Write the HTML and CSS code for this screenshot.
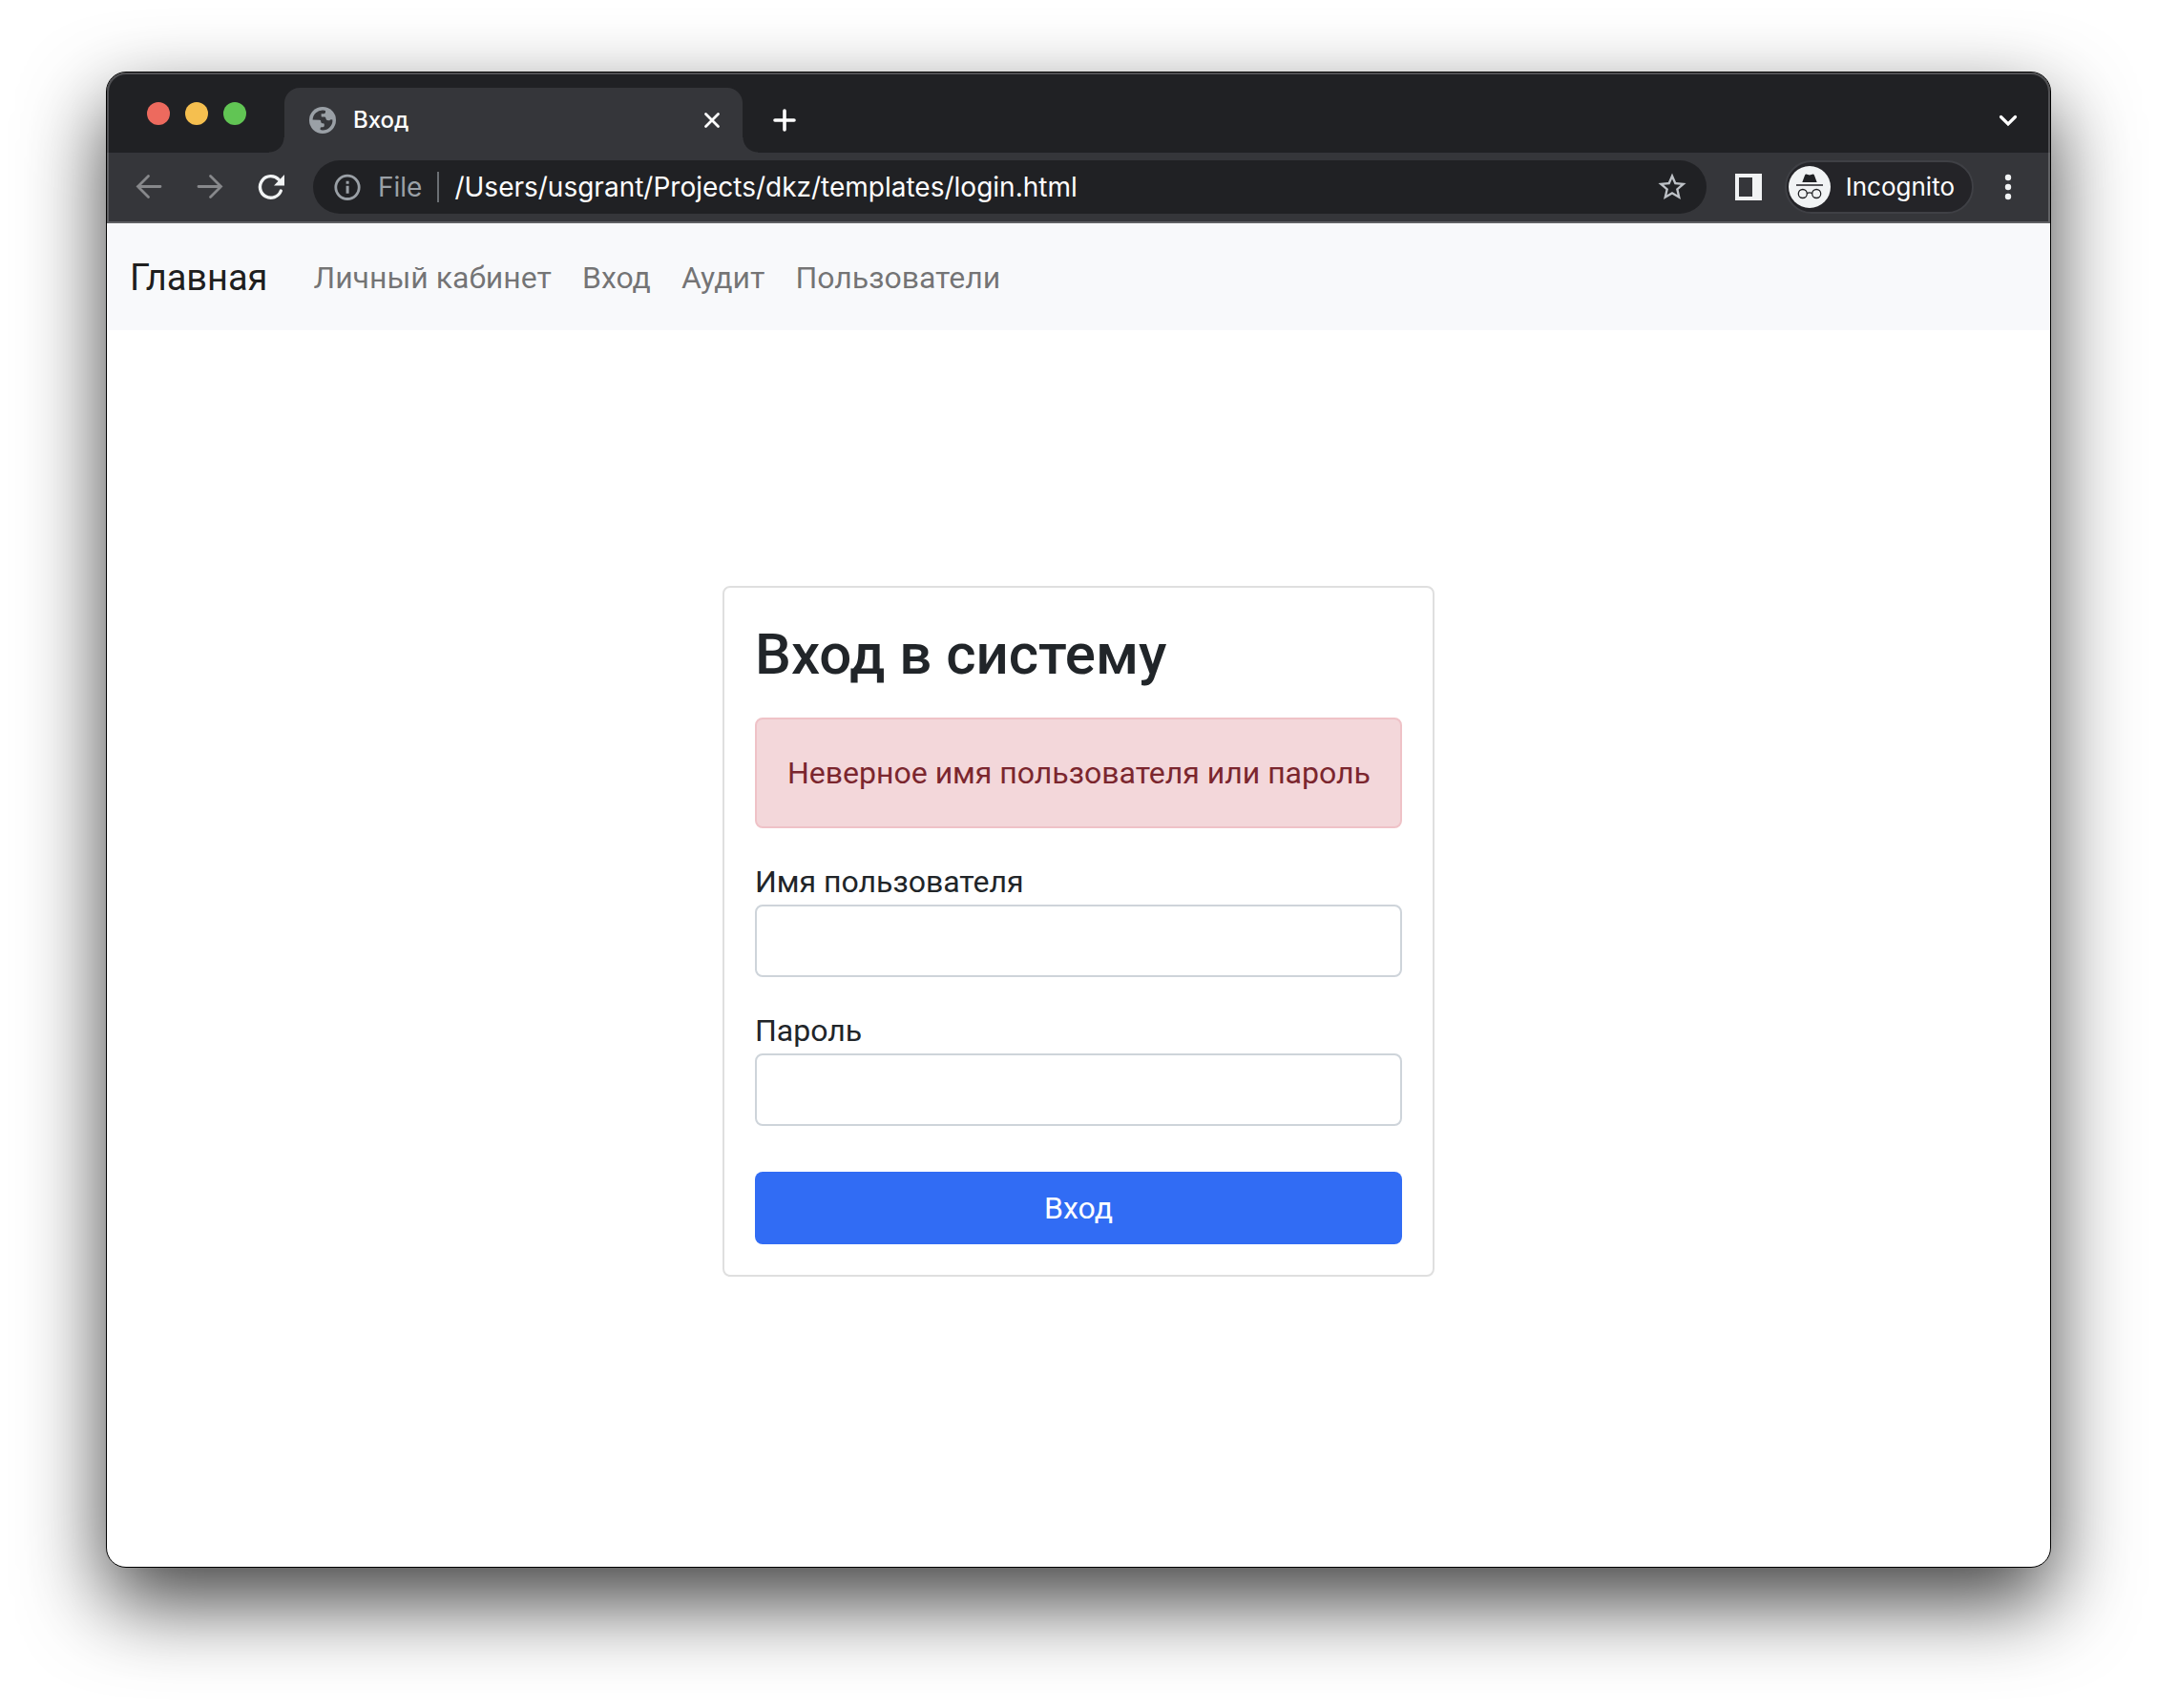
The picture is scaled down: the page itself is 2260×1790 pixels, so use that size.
FILE: index.html
```html
<!DOCTYPE html>
<html lang="ru">
<head>
  <meta charset="utf-8">
  <meta name="viewport" content="width=device-width, initial-scale=1">
  <title>Вход</title>
  <link rel="stylesheet" href="styles.css">
</head>
<body>
  <div class="window">
    <header class="chrome">
      <div class="tab-strip">
        <div class="lights">
          <span class="light light-red"></span>
          <span class="light light-yellow"></span>
          <span class="light light-green"></span>
        </div>
        <div class="tab">
          <svg class="favicon" viewBox="0 0 28 28" aria-hidden="true">
            <circle cx="14" cy="14" r="14" fill="#9aa0a6"/>
            <path fill="#35363a" d="M3.6 13.6A10.4 10.4 0 0 1 14.5 3.6L17 4V5.6Q17 7.2 15.2 7.2H12.6V9.4Q12.6 10.6 13.8 10.6H16.2Q17.4 10.8 17.4 12.2Q17.6 14.2 20 14.2H21.4Q22 12.6 24.4 13.4A10.4 10.4 0 0 1 14 24.4L11.6 24V22.4Q11.6 21.2 13 21.2H14.4Q15.8 21 15.8 19.4V18.4Q15.8 17.2 14.4 17.2H13.4Q12.2 17 12.2 15.6V14.8Q12 13.8 10.8 13.8Z"/>
          </svg>
          <span class="tab-title">Вход</span>
          <button class="icon-button tab-close" type="button" aria-label="Закрыть вкладку">
            <svg viewBox="0 0 28 28"><path d="M7.5 7.5l13 13M20.5 7.5l-13 13" fill="none" stroke="#fff" stroke-width="2.8" stroke-linecap="round"/></svg>
          </button>
        </div>
        <button class="icon-button new-tab" type="button" aria-label="Новая вкладка">
          <svg viewBox="0 0 32 32"><path d="M16 6v20M6 16h20" fill="none" stroke="#fff" stroke-width="3.6" stroke-linecap="round"/></svg>
        </button>
        <button class="icon-button tab-search" type="button" aria-label="Поиск вкладок">
          <svg viewBox="0 0 32 32"><path d="M8.5 12.5l7.5 7.5 7.5-7.5" fill="none" stroke="#fff" stroke-width="3.2" stroke-linecap="round"/></svg>
        </button>
      </div>

      <div class="toolbar">
        <div class="history">
          <button class="icon-button" type="button" aria-label="Назад">
            <svg viewBox="0 0 32 32"><path d="M28 15.5H4.5M15.5 4.5l-11 11 11 11" fill="none" stroke="#87888b" stroke-width="2.8" stroke-linecap="round"/></svg>
          </button>
          <button class="icon-button" type="button" aria-label="Вперёд">
            <svg viewBox="0 0 32 32"><path d="M4 15.5h23.5M16.5 4.5l11 11-11 11" fill="none" stroke="#87888b" stroke-width="2.8" stroke-linecap="round"/></svg>
          </button>
          <button class="icon-button" type="button" aria-label="Обновить">
            <svg viewBox="0 0 32 32"><path d="M26.3 20A11.3 11.3 0 1 1 24 8.2" fill="none" stroke="#f1f3f4" stroke-width="3.4" stroke-linecap="round"/><path d="M30 3v11.5H19z" fill="#f1f3f4"/></svg>
          </button>
        </div>
        <div class="omnibox">
          <svg class="icon" viewBox="0 0 32 32" aria-hidden="true"><circle cx="16" cy="16.3" r="12.2" fill="none" stroke="#9aa0a6" stroke-width="2.8"/><path d="M14.6 9.8h3v3h-3zM14.6 14.8h3v8h-3z" fill="#9aa0a6"/></svg>
          <label class="scheme" for="address">File</label>
          <span class="divider"></span>
          <input class="address" id="address" type="text" value="/Users/usgrant/Projects/dkz/templates/login.html">
          <button class="icon-button" type="button" aria-label="Добавить в закладки">
            <svg viewBox="1 1 22 22"><path fill="#bdc1c6" d="M22 9.24l-7.19-.62L12 2 9.19 8.63 2 9.24l5.46 4.73L5.82 21 12 17.27 18.18 21l-1.63-7.03L22 9.24zM12 15.4l-3.76 2.27 1-4.28-3.32-2.88 4.38-.38L12 6.1l1.71 4.04 4.38.38-3.32 2.88 1 4.28L12 15.4z"/></svg>
          </button>
        </div>
        <button class="icon-button" type="button" aria-label="Боковая панель">
          <svg viewBox="0 0 32 32"><path fill="#f1f3f4" fill-rule="evenodd" d="M2 2h28v28H2zM6 6v20h14V6z"/></svg>
        </button>
        <button class="profile" type="button">
          <svg class="avatar" viewBox="0 0 44 44" aria-hidden="true">
            <circle cx="22" cy="22" r="22" fill="#f1f3f4"/>
            <path fill="#202124" d="M14.3 17L17 9.8Q17.6 8.2 19.2 8.7L22 9.4 24.8 8.7Q26.4 8.2 27 9.8L29.7 17zM8 19.3h28v1.5H8z"/>
            <g fill="none" stroke="#202124" stroke-width="1.3"><circle cx="14.8" cy="29" r="4.5"/><circle cx="29.2" cy="29" r="4.5"/><path d="M19.2 28.6q2.8-1.6 5.6 0"/></g>
          </svg>
          Incognito
        </button>
        <button class="icon-button" type="button" aria-label="Меню">
          <svg viewBox="0 0 32 32"><g fill="#f1f3f4"><circle cx="16" cy="6" r="3.2"/><circle cx="16" cy="16" r="3.2"/><circle cx="16" cy="26" r="3.2"/></g></svg>
        </button>
      </div>
    </header>

    <nav class="navbar">
      <a class="brand" href="#">Главная</a>
      <a class="nav-link" href="#">Личный кабинет</a>
      <a class="nav-link" href="#">Вход</a>
      <a class="nav-link" href="#">Аудит</a>
      <a class="nav-link" href="#">Пользователи</a>
    </nav>

    <main class="page">
      <form class="card">
        <h1 class="card-title">Вход в систему</h1>
        <p class="alert" role="alert">Неверное имя пользователя или пароль</p>
        <div class="field">
          <label for="username">Имя пользователя</label>
          <input class="control" id="username" type="text">
        </div>
        <div class="field">
          <label for="password">Пароль</label>
          <input class="control" id="password" type="password">
        </div>
        <button class="submit" type="button">Вход</button>
      </form>
    </main>
  </div>
</body>
</html>
```
FILE: styles.css
```css
* {
  box-sizing: border-box;
}

body {
  display: flex;
  min-height: 100vh;
  margin: 0;
  padding: 75px 111px 147px;
  background: #fff;
  color: #212529;
  font-family: Roboto, "Liberation Sans", sans-serif;
  font-size: 32px;
  line-height: 48px;
}

button,
input {
  margin: 0;
  font: inherit;
}

.window {
  display: flex;
  flex: 1;
  flex-direction: column;
  min-width: 0;
  overflow: hidden;
  border: 1px solid #000;
  border-radius: 21px;
  background: #fff;
  box-shadow: 0 36px 86px rgba(0, 0, 0, 0.74);
}

/* Browser frame */

.chrome {
  position: relative;
  border-bottom: 2px solid #5f6063;
  background: #35363a;
  color: #fff;
  font-family: Inter, "Liberation Sans", sans-serif;
}

.chrome::after {
  position: absolute;
  inset: 0;
  border: 2px solid rgba(255, 255, 255, 0.22);
  border-bottom: 0;
  border-radius: 20px 20px 0 0;
  content: "";
  pointer-events: none;
}

.tab-strip {
  display: flex;
  align-items: center;
  height: 84px;
  padding: 16px 28px 0 42px;
  background: #202124;
}

.lights {
  display: flex;
  gap: 16px;
  margin-right: 40px;
  padding-bottom: 14px;
}

.light {
  width: 24px;
  height: 24px;
  border-radius: 50%;
}

.light-red {
  background: #ed6a5e;
}

.light-yellow {
  background: #f5bf4f;
}

.light-green {
  background: #61c554;
}

.tab {
  position: relative;
  display: flex;
  align-items: center;
  width: 480px;
  height: 68px;
  padding: 0 18px 0 26px;
  border-radius: 16px 16px 0 0;
  background: #35363a;
  font-size: 24px;
  font-weight: 500;
}

.tab::before,
.tab::after {
  position: absolute;
  bottom: 0;
  width: 16px;
  height: 16px;
  content: "";
}

.tab::before {
  right: 100%;
  background: radial-gradient(circle at 0 0, transparent 15px, #35363a 16px);
}

.tab::after {
  left: 100%;
  background: radial-gradient(circle at 100% 0, transparent 15px, #35363a 16px);
}

.favicon {
  width: 28px;
  height: 28px;
}

.tab-title {
  flex: 1;
  padding-left: 18px;
}

.icon-button {
  flex: none;
  width: 32px;
  height: 32px;
  padding: 0;
  border: 0;
  background: none;
}

.icon-button svg {
  display: block;
  width: 100%;
  height: 100%;
}

.tab-close {
  width: 28px;
  height: 28px;
}

.new-tab {
  margin-left: 28px;
}

.tab-search {
  margin-left: auto;
}

.toolbar {
  display: flex;
  align-items: center;
  height: 72px;
  padding: 0 28px;
  font-size: 28px;
}

.history {
  display: flex;
  gap: 32px;
}

.omnibox {
  display: flex;
  flex: 1;
  align-items: center;
  height: 56px;
  margin: 0 28px;
  padding: 0 20px;
  border-radius: 28px;
  background: #202124;
}

.icon {
  width: 32px;
  height: 32px;
}

.scheme {
  padding: 0 16px;
  color: #9aa0a6;
}

.divider {
  width: 2px;
  height: 32px;
  background: #6b6f74;
}

.address {
  flex: 1;
  min-width: 0;
  padding: 0 16px;
  border: 0;
  outline: 0;
  background: none;
  color: #fff;
}

.profile {
  display: flex;
  align-items: center;
  gap: 16px;
  height: 56px;
  margin: 0 20px 0 22px;
  padding: 0 18px 0 2px;
  border: 2px solid #3f4045;
  border-radius: 28px;
  background: #242428;
  color: #fff;
  font-size: 26px;
}

.avatar {
  width: 44px;
  height: 44px;
}

/* Site navigation */

.navbar {
  display: flex;
  align-items: center;
  gap: 32px;
  height: 112px;
  padding: 2px 24px 0;
  background: #f8f9fb;
}

.brand {
  margin-right: 16px;
  color: rgba(0, 0, 0, 0.9);
  font-size: 38px;
  text-decoration: none;
}

.nav-link {
  color: rgba(0, 0, 0, 0.55);
  text-decoration: none;
}

/* Login form */

.page {
  display: flex;
  flex: 1;
  align-items: center;
  justify-content: center;
  padding-bottom: 36px;
}

.card {
  display: flex;
  flex-direction: column;
  gap: 32px;
  width: 746px;
  max-width: 100%;
  padding: 32px;
  border: 2px solid #dfdfdf;
  border-radius: 8px;
}

.card-title {
  margin: 0;
  padding-top: 4px;
  font-size: 60px;
  font-weight: 500;
  line-height: 68px;
}

.alert {
  margin: 0;
  padding: 32px 24px 32px 32px;
  border: 2px solid #efc2c7;
  border-radius: 8px;
  background: #f3d7da;
  color: #7b262e;
}

.field {
  display: flex;
  flex-direction: column;
}

.control {
  height: 76px;
  padding: 12px 24px;
  border: 2px solid #ced4da;
  border-radius: 8px;
  background: #fff;
  color: inherit;
}

.submit {
  height: 76px;
  margin-top: 16px;
  border: 0;
  border-radius: 8px;
  background: #316cf4;
  color: #fff;
}
```
